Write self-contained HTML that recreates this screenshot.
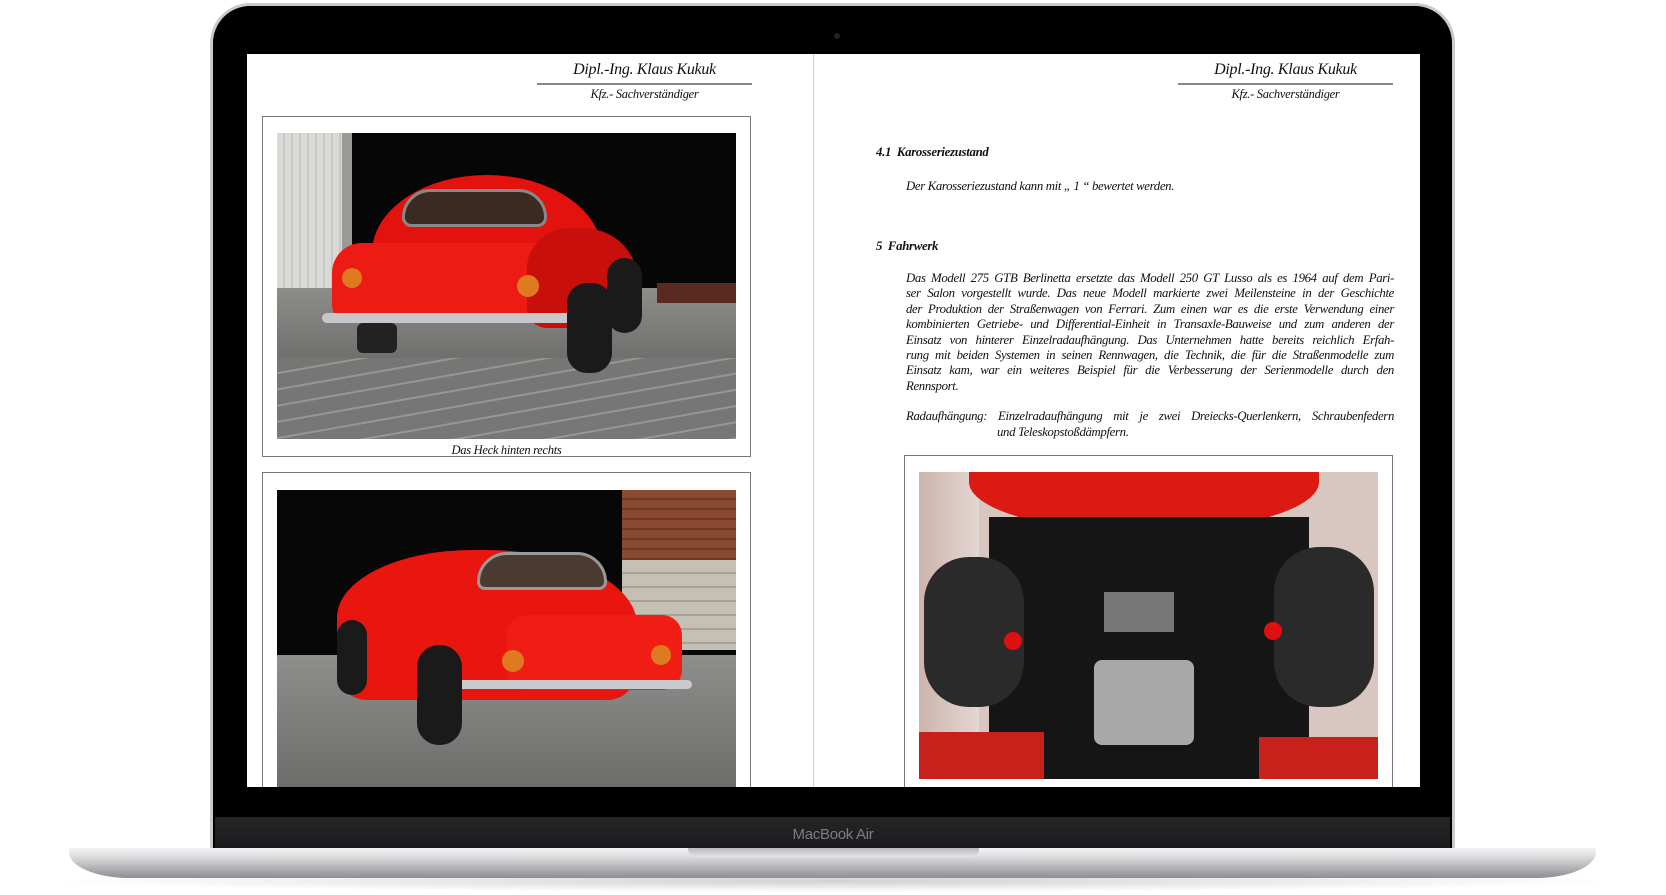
<!DOCTYPE html>
<html><head><meta charset="utf-8"><style>
*{margin:0;padding:0;box-sizing:border-box}
body{width:1666px;height:895px;background:#fff;position:relative;overflow:hidden;font-family:"Liberation Serif",serif}
.abs{position:absolute}
.body{left:210px;top:3px;width:1245px;height:852px;border-radius:40px 40px 6px 6px;background:#000;border:3px solid #c9cacc;border-bottom:none}
.screen{left:247px;top:54px;width:1173px;height:733px;background:#fff;overflow:hidden}
.chin{left:215px;top:817px;width:1235px;height:33px;background:linear-gradient(#242527,#1a1b1d)}
.base{left:69px;top:848px;width:1527px;height:30px;border-radius:2px 2px 60px 60px/2px 2px 26px 26px;background:linear-gradient(#f4f4f5 0,#e2e3e5 22%,#b9babd 60%,#8d8e91 100%)}
.notch{left:688px;top:848px;width:291px;height:9px;border-radius:0 0 8px 8px;background:linear-gradient(#b9babd,#e3e4e6)}
.shadow{left:40px;top:870px;width:1590px;height:22px;border-radius:50%;background:radial-gradient(ellipse at center,rgba(0,0,0,.18),rgba(0,0,0,0) 70%)}
.it{font-style:italic;color:#111}
.hd{font-size:16px;text-align:center;letter-spacing:-0.3px}
.sub{font-size:12.5px;text-align:center;letter-spacing:-0.3px}
.hline{height:2px;background:#888}
.box{border:1.5px solid #777;background:#fff}
.p{font-size:12.8px;line-height:15.4px;font-style:italic;color:#111;letter-spacing:-0.35px}
.p div{text-align:justify;text-align-last:justify;white-space:nowrap;height:15.4px}
.p div.l{text-align-last:left}
</style></head><body>
<div class="abs shadow"></div>
<div class="abs body"></div>
<div class="abs" style="left:834px;top:33px;width:6px;height:6px;border-radius:50%;background:#222"></div>
<div class="abs chin"></div>
<div class="abs it" style="left:0;width:1666px;top:826px;text-align:center;font-family:'Liberation Sans',sans-serif;font-style:normal;font-size:15px;color:#7c7d80;letter-spacing:-0.3px">MacBook Air</div>
<div class="abs base"></div>
<div class="abs notch"></div>

<div class="abs screen">
  <div class="abs" style="left:566px;top:0;width:1px;height:733px;background:#cfcfcf"></div>
  <div class="abs it hd" style="left:290px;width:215px;top:7px">Dipl.-Ing. Klaus Kukuk</div>
  <div class="abs hline" style="left:290px;width:215px;top:29px"></div>
  <div class="abs it sub" style="left:290px;width:215px;top:33px">Kfz.- Sachverständiger</div>
  <div class="abs box" style="left:15px;top:62px;width:489px;height:341px"></div>
  <div class="abs" style="left:30px;top:79px;width:459px;height:306px;overflow:hidden;background:#060606">
    <div class="abs" style="left:0;top:0;width:65px;height:160px;background:repeating-linear-gradient(90deg,#d9d9d6 0 6px,#c8c8c4 6px 8px)"></div>
    <div class="abs" style="left:65px;top:0;width:10px;height:165px;background:#9a9a96"></div>
    <div class="abs" style="left:0;top:155px;width:459px;height:151px;background:linear-gradient(#8d8d8a,#6d6d6b 50%,#7a7a78)"></div>
    <div class="abs" style="left:0;top:225px;width:459px;height:81px;background:repeating-linear-gradient(170deg,#777 0 14px,#9a9a98 14px 16px),#808080;opacity:.9"></div>
    <div class="abs" style="left:380px;top:150px;width:79px;height:20px;background:#5a2a20"></div>
    <div class="abs" style="left:95px;top:42px;width:230px;height:130px;border-radius:50% 50% 20px 20px/60% 60% 20px 20px;background:#e3120e"></div>
    <div class="abs" style="left:55px;top:110px;width:250px;height:80px;border-radius:30px 30px 18px 18px;background:#ec1b14"></div>
    <div class="abs" style="left:250px;top:95px;width:110px;height:100px;border-radius:40% 50% 30px 20px;background:#c90f0c"></div>
    <div class="abs" style="left:125px;top:56px;width:145px;height:38px;border-radius:30px 30px 10px 10px;background:#3a2a22;border:3px solid #888"></div>
    <div class="abs" style="left:65px;top:135px;width:20px;height:20px;border-radius:50%;background:#e07a20"></div>
    <div class="abs" style="left:240px;top:142px;width:22px;height:22px;border-radius:50%;background:#e07a20"></div>
    <div class="abs" style="left:45px;top:180px;width:250px;height:10px;border-radius:5px;background:#c8c8cc"></div>
    <div class="abs" style="left:80px;top:190px;width:40px;height:30px;border-radius:6px;background:#222"></div>
    <div class="abs" style="left:290px;top:150px;width:45px;height:90px;border-radius:20px;background:#1a1a1a"></div>
    <div class="abs" style="left:330px;top:125px;width:35px;height:75px;border-radius:18px;background:#1a1a1a"></div>
  </div>
  <div class="abs it" style="left:30px;width:459px;top:389px;text-align:center;font-size:12.5px;letter-spacing:-0.3px">Das Heck hinten rechts</div>
  <div class="abs box" style="left:15px;top:418px;width:489px;height:340px"></div>
  <div class="abs" style="left:30px;top:436px;width:459px;height:300px;overflow:hidden;background:#070707">
    <div class="abs" style="left:345px;top:0;width:114px;height:70px;background:repeating-linear-gradient(#8a4a32 0 8px,#6e3826 8px 10px)"></div>
    <div class="abs" style="left:345px;top:70px;width:114px;height:90px;background:repeating-linear-gradient(#c6c0b4 0 12px,#a8a296 12px 14px)"></div>
    <div class="abs" style="left:0;top:165px;width:459px;height:135px;background:linear-gradient(#8e8e8c,#6c6c6a)"></div>
    <div class="abs" style="left:60px;top:60px;width:300px;height:150px;border-radius:45% 50% 30px 30px;background:#e8160f"></div>
    <div class="abs" style="left:200px;top:62px;width:130px;height:38px;border-radius:30px 30px 8px 8px;background:#4a3a30;border:3px solid #999"></div>
    <div class="abs" style="left:230px;top:125px;width:175px;height:75px;border-radius:20px;background:#ef1d14"></div>
    <div class="abs" style="left:225px;top:160px;width:22px;height:22px;border-radius:50%;background:#e07a20"></div>
    <div class="abs" style="left:374px;top:155px;width:20px;height:20px;border-radius:50%;background:#e07a20"></div>
    <div class="abs" style="left:170px;top:190px;width:245px;height:9px;border-radius:5px;background:#cacace"></div>
    <div class="abs" style="left:140px;top:155px;width:45px;height:100px;border-radius:22px;background:#1a1a1a"></div>
    <div class="abs" style="left:60px;top:130px;width:30px;height:75px;border-radius:15px;background:#1a1a1a"></div>
  </div>
  <div class="abs it hd" style="left:931px;width:215px;top:7px">Dipl.-Ing. Klaus Kukuk</div>
  <div class="abs hline" style="left:931px;width:215px;top:29px"></div>
  <div class="abs it sub" style="left:931px;width:215px;top:33px">Kfz.- Sachverständiger</div>
  <div class="abs it" style="left:629px;top:91px;font-size:12.8px;font-weight:bold;letter-spacing:-0.3px">4.1&nbsp; Karosseriezustand</div>
  <div class="abs it" style="left:659px;top:125px;font-size:12.8px;letter-spacing:-0.35px">Der Karosseriezustand kann mit „ 1 “ bewertet werden.</div>
  <div class="abs it" style="left:629px;top:185px;font-size:12.8px;font-weight:bold;letter-spacing:-0.3px">5&nbsp; Fahrwerk</div>
  <div class="abs p" style="left:659px;top:217px;width:488px">
    <div>Das Modell 275 GTB Berlinetta ersetzte das Modell 250 GT Lusso als es 1964 auf dem Pari-</div>
    <div>ser Salon vorgestellt wurde. Das neue Modell markierte zwei Meilensteine in der Geschichte</div>
    <div>der Produktion der Straßenwagen von Ferrari. Zum einen war es die erste Verwendung einer</div>
    <div>kombinierten Getriebe- und Differential-Einheit in Transaxle-Bauweise und zum anderen der</div>
    <div>Einsatz von hinterer Einzelradaufhängung. Das Unternehmen hatte bereits reichlich Erfah-</div>
    <div>rung mit beiden Systemen in seinen Rennwagen, die Technik, die für die Straßenmodelle zum</div>
    <div>Einsatz kam, war ein weiteres Beispiel für die Verbesserung der Serienmodelle durch den</div>
    <div class="l">Rennsport.</div>
  </div>
  <div class="abs p" style="left:659px;top:355px;width:488px">
    <div>Radaufhängung: Einzelradaufhängung mit je zwei Dreiecks-Querlenkern, Schraubenfedern</div>
  </div>
  <div class="abs p" style="left:750px;top:371px">und Teleskopstoßdämpfern.</div>
  <div class="abs box" style="left:657px;top:401px;width:489px;height:360px"></div>
  <div class="abs" style="left:672px;top:418px;width:459px;height:307px;overflow:hidden;background:#d8c6c0">
    <div class="abs" style="left:0;top:0;width:60px;height:307px;background:linear-gradient(90deg,#cdb4ad,#e4d6d2)"></div>
    <div class="abs" style="left:50px;top:-40px;width:350px;height:100px;border-radius:0 0 50% 50%;background:#dc1a14"></div>
    <div class="abs" style="left:70px;top:45px;width:320px;height:262px;background:#151515"></div>
    <div class="abs" style="left:5px;top:85px;width:100px;height:150px;border-radius:45px;background:#2a2a2a"></div>
    <div class="abs" style="left:355px;top:75px;width:100px;height:160px;border-radius:45px;background:#2a2a2a"></div>
    <div class="abs" style="left:175px;top:188px;width:100px;height:85px;border-radius:8px;background:#a8a8a8"></div>
    <div class="abs" style="left:185px;top:120px;width:70px;height:40px;background:#777"></div>
    <div class="abs" style="left:85px;top:160px;width:18px;height:18px;border-radius:50%;background:#e01010"></div>
    <div class="abs" style="left:345px;top:150px;width:18px;height:18px;border-radius:50%;background:#e01010"></div>
    <div class="abs" style="left:0;top:260px;width:125px;height:47px;background:#c8201a"></div>
    <div class="abs" style="left:340px;top:265px;width:121px;height:42px;background:#c8201a"></div>
  </div>
</div>
</body></html>
